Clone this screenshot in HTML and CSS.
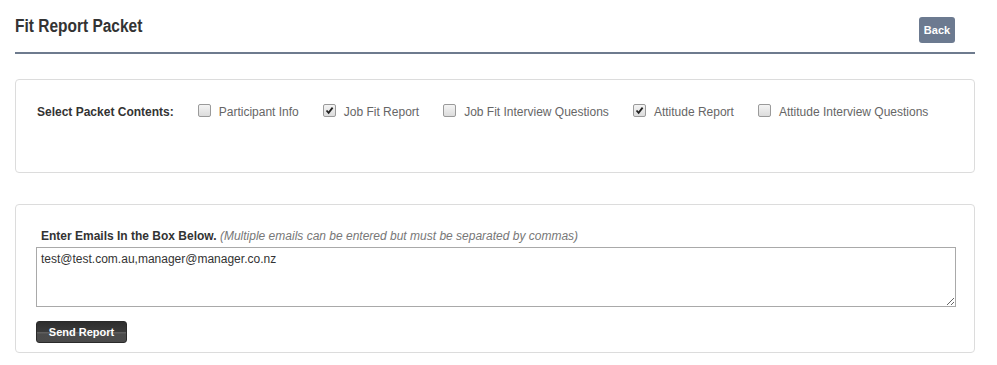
FILE: index.html
```html
<!DOCTYPE html>
<html lang="en">
<head>
    <meta charset="UTF-8">
    <meta name="viewport" content="width=device-width, initial-scale=1.0">
    <title>Fit Report Packet</title>
    <link rel="stylesheet" href="styles.css">
</head>
<body>
    <div class="page">
        <div class="page-header">
            <h1 class="page-title">Fit Report Packet</h1>
            <button class="back-btn">Back</button>
        </div>

        <div class="panel packet-panel">
            <div class="packet-row">
                <span class="packet-label">Select Packet Contents:</span>
                <label class="check-item">
                    <span class="check-box"></span>
                    Participant Info
                </label>
                <label class="check-item">
                    <span class="check-box checked">
                        <svg viewBox="0 0 13 13" width="13" height="13"><path d="M3.5 6.5 L5.6 8.8 L9.6 3.6" fill="none" stroke="#222" stroke-width="1.8"/></svg>
                    </span>
                    Job Fit Report
                </label>
                <label class="check-item">
                    <span class="check-box"></span>
                    Job Fit Interview Questions
                </label>
                <label class="check-item">
                    <span class="check-box checked">
                        <svg viewBox="0 0 13 13" width="13" height="13"><path d="M3.5 6.5 L5.6 8.8 L9.6 3.6" fill="none" stroke="#222" stroke-width="1.8"/></svg>
                    </span>
                    Attitude Report
                </label>
                <label class="check-item">
                    <span class="check-box"></span>
                    Attitude Interview Questions
                </label>
            </div>
        </div>

        <div class="panel email-panel">
            <div class="email-label">
                <strong>Enter Emails In the Box Below.</strong>
                <em>(Multiple emails can be entered but must be separated by commas)</em>
            </div>
            <textarea class="email-box">test@test.com.au,manager@manager.co.nz</textarea>
            <button class="send-btn">Send Report</button>
        </div>
    </div>
</body>
</html>
```

FILE: styles.css
```css
* {
    margin: 0;
    padding: 0;
    box-sizing: border-box;
}

body {
    background: #fff;
    font-family: 'Liberation Sans', Arial, sans-serif;
    font-size: 12px;
    color: #333;
}

.page {
    width: 960px;
    margin-left: 15px;
}

.page-header {
    height: 54px;
    padding: 16px 20px 0 0;
    display: flex;
    justify-content: space-between;
    align-items: flex-start;
    border-bottom: 2px solid #6e7b8e;
}

/* condensed heading face: squeeze the bold sans */
.page-title {
    display: inline-block;
    font-family: 'Liberation Sans', Arial, sans-serif;
    font-size: 18px;
    line-height: 20px;
    font-weight: bold;
    color: #333;
    transform: scaleX(0.86);
    transform-origin: left center;
}

.back-btn {
    margin-top: 1px;
    width: 36px;
    height: 26px;
    border: none;
    border-radius: 3px;
    background: #6c7a90;
    color: #fff;
    font-family: 'Liberation Sans', Arial, sans-serif;
    font-size: 11px;
    font-weight: bold;
    cursor: pointer;
}

.panel {
    border: 1px solid #dcdcdc;
    border-radius: 4px;
    background: #fff;
}

.packet-panel {
    margin-top: 25px;
    height: 94px;
    padding: 24px 21px 0;
}

.packet-row {
    display: flex;
    align-items: center;
    gap: 24px;
    line-height: 16px;
}

.packet-label {
    font-weight: bold;
    color: #333;
}

.check-item {
    display: flex;
    align-items: center;
    gap: 8px;
    color: #666;
    cursor: pointer;
}

.check-box {
    width: 13px;
    height: 13px;
    margin-top: -4px;
    border: 1px solid #9a9a9a;
    border-radius: 2px;
    background: linear-gradient(#f4f4f4, #dcdcdc);
    position: relative;
}

.check-box svg {
    position: absolute;
    left: -1px;
    top: -1px;
}

.email-panel {
    margin-top: 31px;
    padding: 23px 19px 9px 20px;
}

.email-label {
    padding-left: 5px;
    line-height: 16px;
}

.email-label strong {
    color: #333;
}

.email-label em {
    color: #777;
}

.email-box {
    display: block;
    width: 920px;
    height: 60px;
    margin-top: 3px;
    padding: 3px 4px;
    border: 1px solid #a9a9a9;
    font-family: 'Liberation Sans', Arial, sans-serif;
    font-size: 12px;
    line-height: 16px;
    color: #333;
    resize: both;
}

.send-btn {
    display: block;
    margin-top: 14px;
    width: 91px;
    height: 22px;
    border: 1px solid #2a2a2a;
    border-radius: 3px;
    background: linear-gradient(#2e2e2e 0%, #3a3a3a 48%, #606060 52%, #4b4b4b 62%, #4a4a4a 100%);
    color: #fff;
    font-family: 'Liberation Sans', Arial, sans-serif;
    font-size: 11px;
    font-weight: bold;
    cursor: pointer;
}
```
